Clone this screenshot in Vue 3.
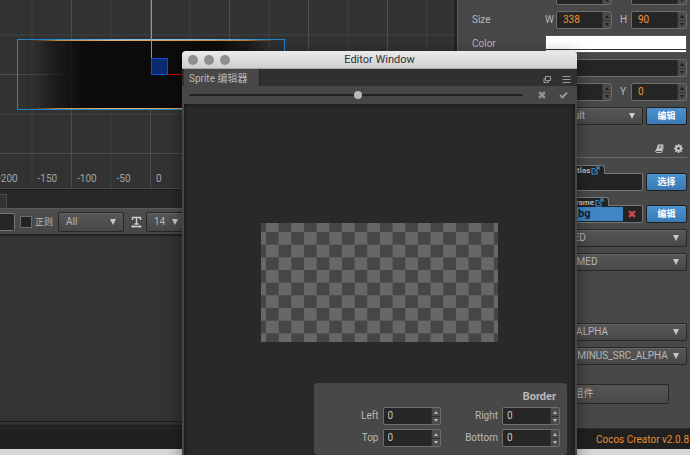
<script setup>
import { ref } from 'vue'

const PITCH = 39.5
const columns = Array.from({ length: 12 }, (_, i) => ({ x: 32 + i * PITCH, major: i % 2 === 1 }))
const lines = Array.from({ length: 5 }, (_, i) => ({ y: 35 + i * PITCH, major: i % 2 === 1 }))
const ticks = ['-200', '-150', '-100', '-50', '0', '50', '100', '150', '200', '250', '300', '350']

const vectors = [
  { name: 'Anchor', axes: [['X', '0.5'], ['Y', '0.5']] },
  { name: 'Size', axes: [['W', '338'], ['H', '90']] },
]
const borders = ['Left', 'Right', 'Top', 'Bottom']
const zoom = ref(101)
</script>

<template>
  <div class="desktop">
    <div class="ide">
      <main class="workspace">
        <section class="left">
          <div class="scene">
            <svg class="grid-view" width="454" height="188" viewBox="0 0 454 188">
              <defs>
                <linearGradient id="fade" x1="0" x2="1" y1="0" y2="0">
                  <stop offset="0" stop-color="#0b0b0b" stop-opacity="0" />
                  <stop offset="0.07" stop-color="#0b0b0b" stop-opacity="0.15" />
                  <stop offset="0.14" stop-color="#0b0b0b" stop-opacity="0.6" />
                  <stop offset="0.25" stop-color="#0b0b0b" stop-opacity="0.97" />
                  <stop offset="0.75" stop-color="#0b0b0b" stop-opacity="0.97" />
                  <stop offset="0.86" stop-color="#0b0b0b" stop-opacity="0.6" />
                  <stop offset="0.93" stop-color="#0b0b0b" stop-opacity="0.15" />
                  <stop offset="1" stop-color="#0b0b0b" stop-opacity="0" />
                </linearGradient>
                <linearGradient id="gold" gradientUnits="userSpaceOnUse" x1="18" x2="285" y1="0" y2="0">
                  <stop offset="0.05" stop-color="#b8742c" stop-opacity="0" />
                  <stop offset="0.15" stop-color="#c98a3c" />
                  <stop offset="0.35" stop-color="#e0b060" />
                  <stop offset="0.6" stop-color="#d8a04e" />
                  <stop offset="0.85" stop-color="#c08030" />
                  <stop offset="0.97" stop-color="#b8742c" stop-opacity="0" />
                </linearGradient>
                <linearGradient id="glow" gradientUnits="userSpaceOnUse" x1="18" x2="285" y1="0" y2="0">
                  <stop offset="0.1" stop-color="#1b86d2" />
                  <stop offset="0.4" stop-color="#7dbde8" />
                  <stop offset="0.7" stop-color="#7dbde8" />
                  <stop offset="0.95" stop-color="#1b86d2" />
                </linearGradient>
              </defs>
              <line v-for="c in columns" :key="'c' + c.x" :x1="c.x" :x2="c.x" y1="0" y2="188" :stroke="c.major ? '#4d4d4d' : '#404040'" />
              <line v-for="l in lines" :key="'l' + l.y" x1="0" x2="454" :y1="l.y" :y2="l.y" :stroke="l.major ? '#4d4d4d' : '#404040'" />
              <rect x="18" y="39" width="267" height="71" fill="url(#fade)" />
              <rect x="17.5" y="39.5" width="267" height="70" fill="none" stroke="#1b86d2" />
              <rect x="18" y="39" width="267" height="1" fill="url(#glow)" />
              <rect x="19" y="40" width="265" height="1" fill="url(#gold)" />
              <rect x="19" y="108" width="265" height="1" fill="url(#gold)" />
              <path d="M151.5 0V59" stroke="#62b95c" />
              <path d="M168 74.5H260" stroke="#d60000" />
              <rect x="151.5" y="58.5" width="16" height="16" fill="#0a2a72" stroke="#0a4ee0" />
              <text v-for="(t, i) in ticks" :key="t" :x="-2 + i * PITCH" y="182" class="tick">{{ t }}</text>
            </svg>
          </div>
          <div class="tabs"><span class="tab-stub"></span></div>
          <div class="console-bar">
            <input class="search" type="text" aria-label="Filter" />
            <label class="regex"><input type="checkbox" />正则</label>
            <span class="pick level"><select aria-label="Level"><option>All</option></select></span>
            <svg class="type-icon" width="11" height="12" viewBox="0 0 11 12" fill="none" stroke="#cfcfcf">
              <path d="M1.5 4V1.5H9.5V4M5.5 1.5V7.5M3.5 8H7.5M0.5 10.5H10.5" stroke-width="1.3" />
              <path d="M2 9V12M9 9V12" stroke-width="0.8" />
            </svg>
            <span class="pick font"><select aria-label="Font size"><option>14</option></select></span>
          </div>
          <div class="console"></div>
        </section>

        <aside class="inspector">
          <div v-for="v in vectors" :key="v.name" class="row">
            <span class="name">{{ v.name }}</span>
            <div class="axes">
              <label v-for="a in v.axes" :key="a[0]" class="axis">{{ a[0] }}
                <span class="number"><input type="text" :value="a[1]" /><span class="steps"><button aria-label="Increase"></button><button aria-label="Decrease"></button></span></span>
              </label>
            </div>
          </div>
          <div class="row">
            <span class="name">Color</span>
            <button class="swatch" aria-label="Color"></button>
          </div>
          <label class="row">
            <span class="name">Opacity</span>
            <span class="number"><input type="text" value="255" /><span class="steps"><button aria-label="Increase"></button><button aria-label="Decrease"></button></span></span>
          </label>
          <div class="row">
            <span class="name">Skew</span>
            <div class="axes">
              <label v-for="a in ['X', 'Y']" :key="a" class="axis">{{ a }}
                <span class="number"><input type="text" value="0" /><span class="steps"><button aria-label="Increase"></button><button aria-label="Decrease"></button></span></span>
              </label>
            </div>
          </div>
          <div class="row">
            <span class="name">Group</span>
            <div class="with-action">
              <span class="pick"><select aria-label="Group"><option>Default</option></select></span>
              <button class="primary">编辑</button>
            </div>
          </div>

          <header class="component-head">
            <svg width="9" height="9" viewBox="0 0 18 18">
              <path d="M6 1H17L13 14H3Q1 14 2 12Z" fill="#c8c8c8" />
              <path d="M2 12Q0 17 3 17H13L17 5" fill="none" stroke="#c8c8c8" stroke-width="1.8" />
              <path d="M7.5 4.5H13.5M6.5 7.5H12.5" stroke="#474747" stroke-width="1.4" />
            </svg>
            <svg width="9" height="9" viewBox="0 0 18 18" fill="none" stroke="#c8c8c8">
              <circle cx="9" cy="9" r="4.6" stroke-width="3.6" />
              <path d="M9 0V4M9 14V18M0 9H4M14 9H18M2.6 2.6L5.4 5.4M12.6 12.6L15.4 15.4M15.4 2.6L12.6 5.4M5.4 12.6L2.6 15.4" stroke-width="3" />
            </svg>
          </header>

          <div class="row asset-row">
            <span class="name">Atlas</span>
            <div class="with-action">
              <div class="asset">
                <span class="kind">sprite-atlas
                  <svg width="9" height="9" viewBox="0 0 18 18" fill="none" stroke="#3d8ecf" stroke-width="2.2"><path d="M12 10V16H2V5H8M10 2H16V8M16 2L7 11" /></svg>
                </span>
                <span class="slot"></span>
              </div>
              <button class="primary">选择</button>
            </div>
          </div>
          <div class="row asset-row">
            <span class="name">Sprite Frame</span>
            <div class="with-action">
              <div class="asset">
                <span class="kind">sprite-frame
                  <svg width="9" height="9" viewBox="0 0 18 18" fill="none" stroke="#3d8ecf" stroke-width="2.2"><path d="M12 10V16H2V5H8M10 2H16V8M16 2L7 11" /></svg>
                </span>
                <span class="slot"><b>toast_bg</b><button aria-label="Clear">
                  <svg width="8" height="8" viewBox="0 0 14 14" stroke="#d04848" stroke-width="4.4"><path d="M2 2L12 12M12 2L2 12" /></svg>
                </button></span>
              </div>
              <button class="primary">编辑</button>
            </div>
          </div>
          <label class="row"><span class="name">Type</span><span class="pick"><select><option>SLICED</option></select></span></label>
          <label class="row"><span class="name">Size Mode</span><span class="pick"><select><option>TRIMMED</option></select></span></label>
          <label class="row blend"><span class="name">Src Blend</span><span class="pick"><select><option>SRC_ALPHA</option></select></span></label>
          <label class="row"><span class="name">Dst Blend</span><span class="pick"><select><option>ONE_MINUS_SRC_ALPHA</option></select></span></label>
          <button class="add">添加组件</button>
        </aside>
      </main>
      <footer class="status">Cocos Creator v2.0.8</footer>
    </div>

    <section class="window">
      <header class="titlebar">
        <span class="lights"><i></i><i></i><i></i></span>
        <h1>Editor Window</h1>
      </header>
      <nav class="window-tabs">
        <button class="tab">Sprite 编辑器</button>
        <span class="tab-tools">
          <svg width="9" height="9" viewBox="0 0 9 9" fill="none" stroke="#9a9a9a"><path d="M2.5 1.5H7.5V5.5H2.5Z" /><path d="M2.5 3.5H1V7.5H5.5V6" /></svg>
          <svg width="9" height="9" viewBox="0 0 9 9" stroke="#9a9a9a"><path d="M0.5 1.5H8.5M0.5 4.5H8.5M0.5 7.5H8.5" /></svg>
        </span>
      </nav>
      <div class="window-bar">
        <input v-model="zoom" type="range" min="0" max="200" aria-label="Zoom" />
        <button aria-label="Cancel"><svg width="8" height="8" viewBox="0 0 14 14" stroke="#969696" stroke-width="4"><path d="M2 2L12 12M12 2L2 12" /></svg></button>
        <button aria-label="Apply"><svg width="9" height="8" viewBox="0 0 18 16" fill="none" stroke="#969696" stroke-width="4"><path d="M2 8L7 13L16 3" /></svg></button>
      </div>
      <div class="canvas">
        <svg class="checker" width="237" height="119" viewBox="0 0 237 119">
          <defs>
            <pattern id="squares" x="5" y="9" width="25.32" height="25.32" patternUnits="userSpaceOnUse">
              <rect width="25.32" height="25.32" fill="#464646" />
              <path d="M12.66 0H25.32V12.66H12.66ZM0 12.66H12.66V25.32H0Z" fill="#676767" />
            </pattern>
          </defs>
          <rect width="237" height="119" fill="url(#squares)" />
        </svg>
        <form class="border-panel" @submit.prevent>
          <h2>Border</h2>
          <label v-for="b in borders" :key="b">{{ b }}
            <span class="number boxed"><input type="text" value="0" /><span class="steps"><button type="button" aria-label="Increase"></button><button type="button" aria-label="Decrease"></button></span></span>
          </label>
        </form>
      </div>
    </section>
  </div>
</template>

<style>
body {
  background: #d6d6d6;
}
</style>

<style scoped>
.desktop {
  position: relative;
  height: 100vh;
  overflow: hidden;
  font: 10px/12px Roboto, "Noto Sans CJK SC", sans-serif;
  color: #b8b8b8;
}
.desktop *,
.desktop *::before,
.desktop *::after {
  box-sizing: border-box;
}
button,
input,
select {
  margin: 0;
  padding: 0;
  border: 0;
  font: inherit;
  color: inherit;
  background: none;
  appearance: none;
  border-radius: 0;
  outline: 0;
}
.ide {
  display: flex;
  flex-direction: column;
  height: calc(100vh - 6px);
  background: #222;
}
.workspace {
  flex: 1;
  min-height: 0;
  display: grid;
  grid-template-columns: minmax(0, 1fr) 233px;
  column-gap: 3px;
  overflow: hidden;
}
.left {
  display: flex;
  flex-direction: column;
  min-height: 0;
  padding-bottom: 6px;
  border-right: 1px solid #3c3c3c;
}
.scene {
  flex: none;
  background: #323232;
  border-bottom: 1px solid #4c4c4c;
  overflow: hidden;
}
.grid-view {
  display: block;
}
.tick {
  font-size: 10px;
  fill: #a2a2a2;
}
.tabs {
  flex: none;
  height: 19px;
  padding-top: 4px;
  background: #282828;
  border-top: 1px solid #1c1c1c;
}
.tab-stub {
  display: block;
  width: 7px;
  height: 14px;
  background: #333;
  border: 1px solid #4a4a4a;
  border-width: 1px 1px 0 0;
}
.console-bar {
  flex: none;
  display: flex;
  align-items: center;
  height: 28px;
  background: linear-gradient(#4e4e4e, #464646);
  border-top: 1px solid #5a5a5a;
  border-bottom: 2px solid #202020;
}
.search {
  width: 15px;
  height: 18px;
  margin-right: 5px;
  background: #262626;
  border: 1px solid #777;
  border-left: 0;
  border-radius: 0 2px 2px 0;
}
.regex {
  display: flex;
  align-items: center;
  gap: 3px;
  width: 38px;
  font-size: 9px;
  white-space: nowrap;
}
.regex input {
  width: 12px;
  height: 12px;
  background: #232323;
  border: 1px solid #6c6c6c;
}
.pick {
  position: relative;
  display: flex;
  flex: 1;
  min-width: 0;
  height: 18px;
}
.pick select {
  width: 100%;
  padding: 0 8px 0 7px;
  background: linear-gradient(#575757, #484848);
  border: 1px solid #272727;
  border-radius: 2px;
  box-shadow: inset 0 1px #646464;
}
.pick::after {
  content: "";
  position: absolute;
  right: 8px;
  top: 6px;
  border: solid transparent;
  border-width: 6px 3px 0;
  border-top-color: #c8c8c8;
}
.pick.level {
  flex: none;
  width: 66px;
  height: 20px;
}
.pick.level::after,
.pick.font::after {
  top: 7px;
}
.type-icon {
  margin: 0 4px 0 7px;
}
.pick.font {
  flex: none;
  width: 38px;
  height: 20px;
}
.pick.font::after {
  right: 6px;
}
.console {
  flex: 1;
  background: #333;
  border-bottom: 1px solid #1c1c1c;
  box-shadow: 0 2px #333, 0 3px #292929;
}

.inspector {
  display: flex;
  flex-direction: column;
  gap: 6px;
  margin-top: -13px;
  padding: 0 3px 0 14px;
  background: #484848;
  border-left: 1px solid #5a5a5a;
}
.row {
  flex: none;
  display: grid;
  grid-template-columns: 73px minmax(0, 1fr);
  align-items: center;
  height: 18px;
}
.name {
  white-space: nowrap;
}
.axes {
  display: grid;
  grid-template-columns: 1fr 1fr;
  gap: 8px;
}
.axis {
  display: grid;
  grid-template-columns: 11px minmax(0, 1fr);
  align-items: center;
}
.number {
  display: flex;
  height: 18px;
  min-width: 0;
  background: #262626;
  border: 1px solid #6e6e6e;
  border-radius: 2px;
  color: #f49130;
}
.number input {
  flex: 1;
  width: 0;
  min-width: 0;
  padding-left: 6px;
}
.steps {
  display: flex;
  flex-direction: column;
  width: 9px;
  background: #4c4c4c;
  border-left: 1px solid #333;
}
.steps button {
  position: relative;
  flex: 1;
}
.steps button + button {
  border-top: 1px solid #333;
}
.steps button::after {
  content: "";
  position: absolute;
  left: 2px;
  top: 3px;
  border: solid transparent;
  border-width: 0 2px 3px;
  border-bottom-color: #1d1d1d;
}
.steps button + button::after {
  top: 2px;
  border-width: 3px 2px 0;
  border-top-color: #1d1d1d;
}
.swatch {
  height: 18px;
  background: linear-gradient(#fff 13px, #333 13px, #333 14px, #fff 14px);
  border: 1px solid #555;
}
.with-action {
  display: flex;
  align-items: flex-end;
  gap: 3px;
}
.primary {
  flex: none;
  width: 41px;
  height: 18px;
  background: linear-gradient(#4b92cf, #3a79b5);
  border: 1px solid #202020;
  border-radius: 2px;
  color: #fff;
  font-size: 9px;
  font-weight: bold;
}
.component-head {
  flex: none;
  display: flex;
  align-items: center;
  justify-content: flex-end;
  gap: 10px;
  height: 19px;
  margin-top: 8px;
  padding-right: 4px;
  border-bottom: 1px solid #6a6a6a;
}
.asset-row {
  height: 26px;
  margin-top: 1px;
}
.asset-row + .asset-row {
  margin-top: 0;
}
.asset-row .name {
  align-self: end;
}
.asset {
  position: relative;
  flex: 1;
  min-width: 0;
}
.kind {
  position: relative;
  z-index: 1;
  display: flex;
  align-items: center;
  gap: 1px;
  width: fit-content;
  height: 9px;
  margin-bottom: -1px;
  padding: 1px 4px 0 3px;
  background: #232323;
  border: 1px solid #777;
  border-bottom: 0;
  border-radius: 2px 3px 0 0;
  font-size: 8px;
  line-height: 8px;
  font-weight: bold;
  white-space: nowrap;
}
.slot {
  display: flex;
  align-items: center;
  height: 18px;
  padding: 1px;
  background: #232323;
  border: 1px solid #777;
  border-radius: 0 2px 2px 2px;
}
.slot b {
  flex: 1;
  height: 14px;
  padding-left: 1px;
  line-height: 14px;
  background: #4186c4;
  color: #14202c;
  font-size: 11px;
}
.slot button {
  display: flex;
  justify-content: center;
  width: 18px;
}
.blend {
  margin-top: 46px;
}
.add {
  flex: none;
  height: 20px;
  margin: 13px 18px 0 6px;
  background: linear-gradient(#575757, #484848);
  border: 1px solid #272727;
  border-radius: 2px;
}
.status {
  flex: none;
  height: 21px;
  padding-right: 1px;
  background: #202020;
  border-top: 1px solid #2c2c2c;
  color: #e88c2e;
  line-height: 21px;
  text-align: right;
}

.window {
  position: absolute;
  z-index: 10;
  left: 182px;
  top: 51px;
  bottom: -6px;
  width: 395px;
  display: flex;
  flex-direction: column;
  border-radius: 4px 4px 0 0;
  background: #474747;
  box-shadow: 0 4px 16px rgba(0, 0, 0, 0.45);
  overflow: hidden;
}
.titlebar {
  flex: none;
  display: grid;
  grid-template-columns: 1fr auto 1fr;
  align-items: center;
  height: 18px;
  padding: 0 6px;
  background: linear-gradient(#ebebeb, #cfcfcf);
  border-bottom: 1px solid #aaa;
}
.lights {
  display: flex;
  gap: 6px;
}
.lights i {
  width: 10px;
  height: 10px;
  border-radius: 50%;
  background: #8e8e8e;
}
.titlebar h1 {
  margin: 0;
  font-size: 11px;
  font-weight: normal;
  color: #303030;
}
.window-tabs {
  flex: none;
  display: flex;
  justify-content: space-between;
  height: 17px;
  padding: 0 6px 0 2px;
  background: #303030;
}
.tab {
  width: 76px;
  padding: 3px 0 0 5px;
  background: #474747;
  border-right: 1px solid #222;
  text-align: left;
  white-space: nowrap;
}
.tab-tools {
  display: flex;
  align-items: center;
  gap: 10px;
  padding-top: 3px;
}
.window-bar {
  flex: none;
  display: flex;
  align-items: center;
  height: 18px;
  padding: 0 9px 0 7px;
}
.window-bar input {
  flex: 1;
  height: 8px;
  margin-right: 15px;
  background: linear-gradient(transparent 3px, #232323 3px, #232323 5px, transparent 5px);
}
.window-bar input::-webkit-slider-thumb {
  appearance: none;
  width: 8px;
  height: 8px;
  border-radius: 50%;
  background: #b8b8b8;
}
.window-bar button {
  display: flex;
}
.window-bar button + button {
  margin-left: 13px;
}
.canvas {
  flex: 1;
  display: grid;
  margin: 0 2px;
  padding: 0 8px 6px;
  background: #292929;
  box-shadow: inset 0 0 5px #111;
}
.checker {
  grid-area: 1 / 1;
  place-self: center;
  margin-top: 6px;
}
.border-panel {
  grid-area: 1 / 1;
  place-self: end;
  display: grid;
  grid-template-columns: 1fr 1fr;
  gap: 4px 0;
  width: 253px;
  padding: 8px 7px 8px 7px;
  background: #484848;
  border-radius: 4px;
}
.border-panel h2 {
  grid-column: 1 / -1;
  margin: 0 4px 0 0;
  font-size: 11px;
  line-height: 12px;
  text-align: right;
}
.border-panel label {
  display: flex;
  align-items: center;
  justify-content: flex-end;
  gap: 4px;
}
.number.boxed {
  width: 58px;
  color: #c4c4c4;
}
.boxed input {
  padding-left: 4px;
}
.boxed .steps button::after {
  border-bottom-color: #bbb;
}
.boxed .steps button + button::after {
  border-bottom-color: transparent;
  border-top-color: #bbb;
}
</style>
